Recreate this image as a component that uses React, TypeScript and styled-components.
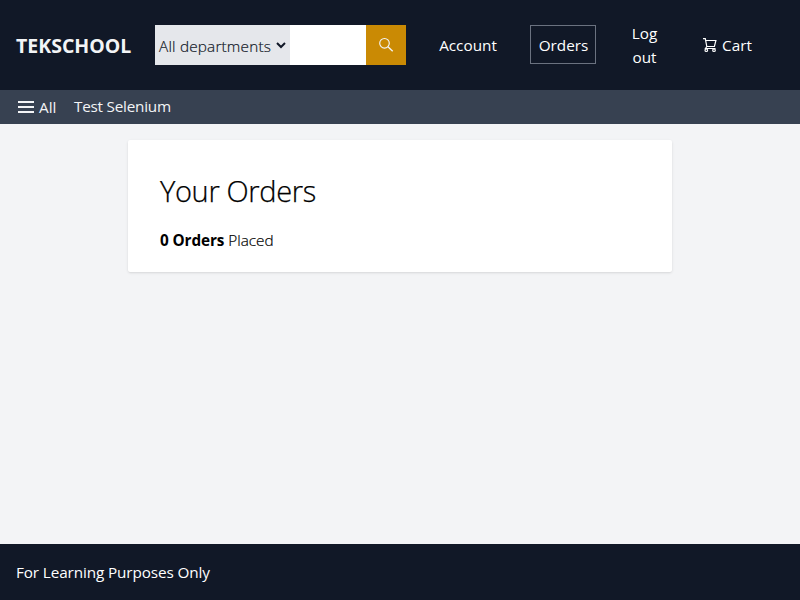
import React from "react";
import styled, { createGlobalStyle } from "styled-components";

const GlobalStyle = createGlobalStyle`
  *, *::before, *::after { box-sizing: border-box; }
  body {
    margin: 0;
    font-family: "Segoe UI", "Open Sans", "Noto Sans", sans-serif;
    font-size: 15.3px;
    line-height: 24px;
    color: #000;
    background: #f3f4f6;
  }
  h1, p { margin: 0; }
`;

const Page = styled.div`
  display: flex;
  flex-direction: column;
  height: 100vh;
  overflow: hidden;
`;

const TopBar = styled.header`
  display: flex;
  align-items: center;
  height: 90px;
  flex: none;
  padding-left: 16px;
  background: #111827;
  color: #fff;
`;

const Logo = styled.a`
  width: 139px;
  padding-top: 2px;
  font-size: 19.5px;
  font-weight: 700;
  line-height: 28px;
  white-space: nowrap;
  color: #f3f4f6;
`;

const SearchForm = styled.form`
  display: flex;
  width: 251px;
  height: 40px;
`;

const Department = styled.button`
  display: flex;
  align-items: center;
  justify-content: space-between;
  width: 135px;
  padding: 2px 4px 0;
  border: 0;
  background: #e5e7eb;
  color: #111827;
  font: inherit;
  font-weight: 300;
  -webkit-text-stroke: 0.2px #111827;
  white-space: nowrap;
`;

const SearchInput = styled.input`
  width: 76px;
  border: 0;
  padding: 0 8px;
  background: #fff;
  font: inherit;
`;

const SearchButton = styled.button`
  display: flex;
  align-items: center;
  justify-content: center;
  width: 40px;
  padding: 0;
  border: 0;
  background: #ca8a04;
  color: #f3f4f6;
`;

const Nav = styled.nav`
  display: flex;
  align-items: center;
  padding-left: 24px;
`;

const NavLink = styled.a<{ $width: number; $gap?: number; $active?: boolean }>`
  display: flex;
  align-items: center;
  justify-content: center;
  gap: 4px;
  width: ${(p) => p.$width}px;
  min-height: 39px;
  margin: 0 ${(p) => p.$gap ?? 0}px ${(p) => (p.$active ? 2 : 0)}px 0;
  padding: ${(p) => (p.$active ? "2px 0 0 1px" : "0")};
  border: 1px solid ${(p) => (p.$active ? "#6b7280" : "transparent")};
  text-align: center;
`;

const SubBar = styled.div`
  display: flex;
  align-items: center;
  height: 34px;
  flex: none;
  padding: 0 0 2px 18px;
  background: #374151;
  color: #f3f4f6;
`;

const MenuButton = styled.a`
  display: flex;
  align-items: center;
  gap: 5px;
  width: 56px;
  padding-top: 2px;
`;

const Main = styled.main`
  flex: 1;
  padding: 16px 128px;
`;

const Card = styled.section`
  height: 132px;
  padding: 32px;
  border-radius: 2px;
  background: #fff;
  box-shadow: 0 1px 3px rgba(0, 0, 0, 0.1), 0 1px 2px -1px rgba(0, 0, 0, 0.1);
`;

const Title = styled.h1`
  font-size: 29px;
  font-weight: 300;
  line-height: 38px;
  letter-spacing: -0.35px;
  -webkit-text-stroke: 0.25px #000;
`;

const Summary = styled.p`
  margin-top: 18px;
  font-weight: 300;
  -webkit-text-stroke: 0.2px #000;
`;

const Count = styled.strong`
  font-weight: 700;
  letter-spacing: -0.1px;
  -webkit-text-stroke: 0;
`;

const Footer = styled.footer`
  display: flex;
  align-items: center;
  height: 56px;
  flex: none;
  padding-left: 16px;
  background: #111827;
  color: #fff;
`;

const Spaced = styled.span<{ $spacing: number }>`
  letter-spacing: ${(p) => p.$spacing}px;
  white-space: nowrap;
`;

const SearchIcon = () => (
  <svg width="16" height="16" viewBox="0 0 16 16" fill="none" stroke="currentColor" strokeWidth="1.15">
    <circle cx="6.5" cy="6.3" r="4.8" />
    <path d="M10 9.8l4.7 4.4" strokeWidth="1.4" />
  </svg>
);

const CartIcon = () => (
  <svg width="16" height="16" viewBox="0 0 16 16" fill="none" stroke="currentColor" strokeWidth="1.2">
    <path d="M1 1.7h2.3l1.5 7.8h7.6l1.5-6H3.7" />
    <path d="M4.8 9.5L3.5 11.5h10" />
    <circle cx="4.3" cy="13.2" r="1.3" />
    <circle cx="12" cy="13.2" r="1.3" />
  </svg>
);

export default function App() {
  return (
    <Page>
      <GlobalStyle />
      <TopBar>
        <Logo>TEKSCHOOL</Logo>
        <SearchForm>
          <Department type="button">
            <Spaced $spacing={0.2}>All departments</Spaced>
            <svg width="10" height="10" viewBox="0 0 10 10" fill="none">
              <path d="M1 2l4 4 4-4" stroke="#111827" strokeWidth="2" />
            </svg>
          </Department>
          <SearchInput />
          <SearchButton type="button">
            <SearchIcon />
          </SearchButton>
        </SearchForm>
        <Nav>
          <NavLink $width={76} $gap={24}>Account</NavLink>
          <NavLink $width={66} $gap={25} $active>Orders</NavLink>
          <NavLink $width={47} $gap={26}>Log<br />out</NavLink>
          <NavLink $width={66}>
            <CartIcon />
            Cart
          </NavLink>
        </Nav>
      </TopBar>
      <SubBar>
        <MenuButton>
          <svg width="16" height="12" viewBox="0 0 16 12">
            <path d="M0 0h16v2H0zM0 5h16v2H0zM0 10h16v2H0z" fill="#f3f4f6" />
          </svg>
          All
        </MenuButton>
        <Spaced $spacing={-0.23}>Test Selenium</Spaced>
      </SubBar>
      <Main>
        <Card>
          <Title>Your Orders</Title>
          <Summary>
            <Count>0 Orders</Count> Placed
          </Summary>
        </Card>
      </Main>
      <Footer>
        <Spaced $spacing={-0.12}>For Learning Purposes Only</Spaced>
      </Footer>
    </Page>
  );
}
